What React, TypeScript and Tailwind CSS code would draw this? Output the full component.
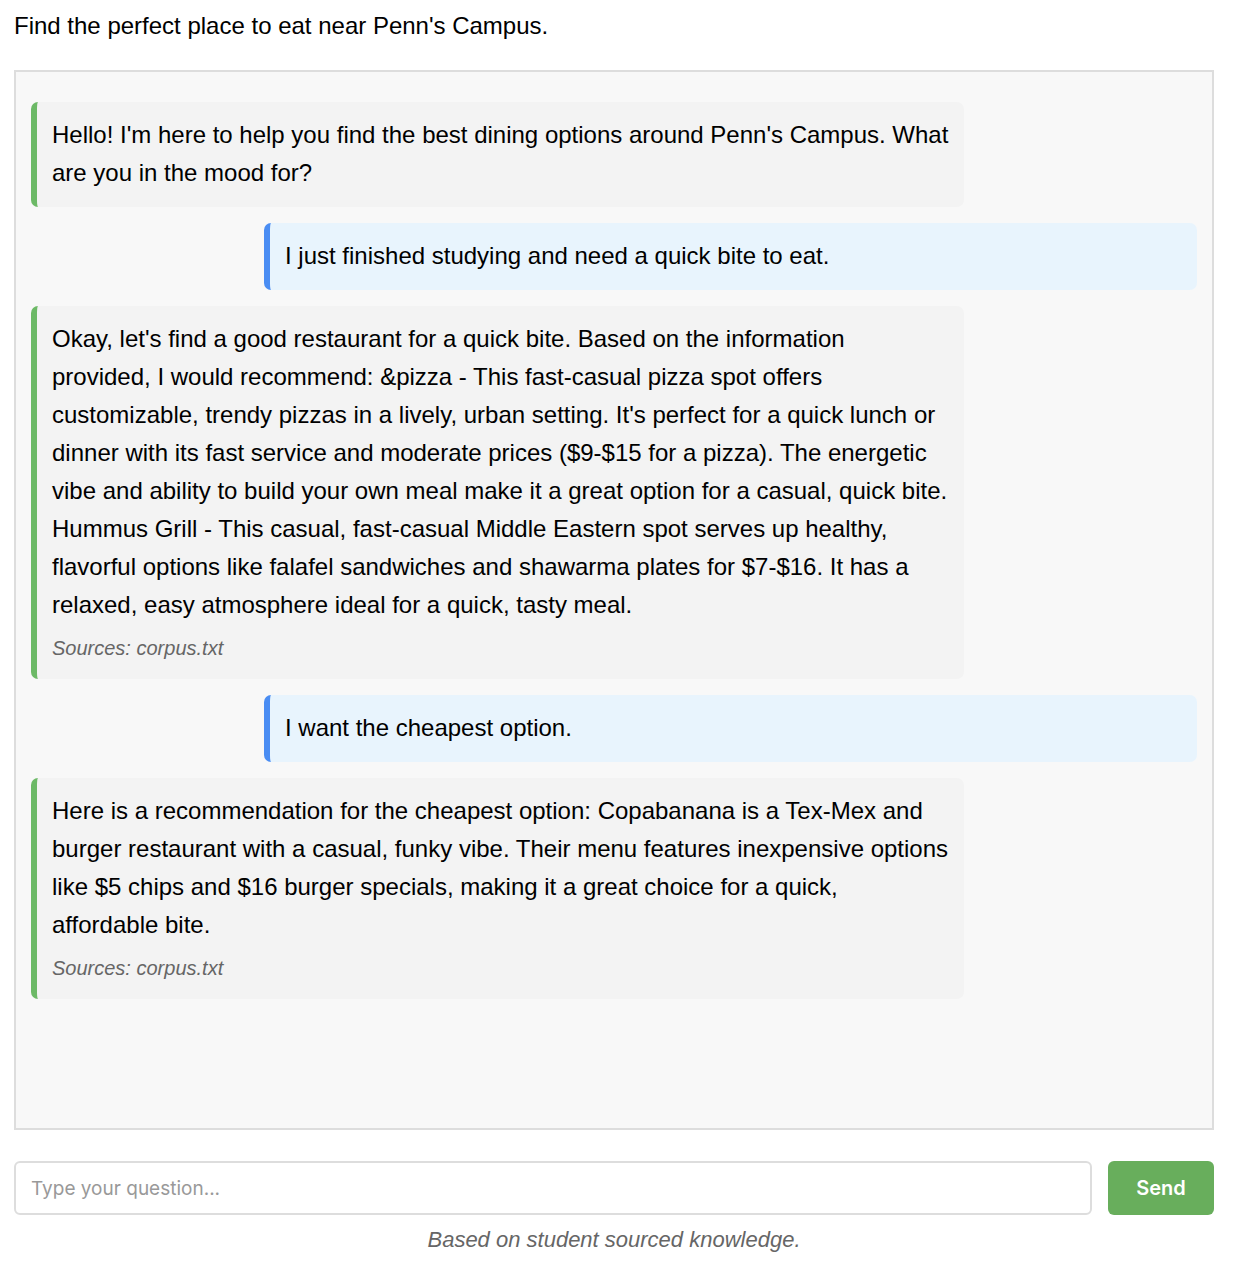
import { useState } from 'react';

type Message = {
  role: 'bot' | 'user';
  lines: string[];
  sources?: string;
};

// lines kept as they wrap in the original chat window
const messages: Message[] = [
  {
    role: 'bot',
    lines: [
      "Hello! I'm here to help you find the best dining options around Penn's Campus. What",
      'are you in the mood for?',
    ],
  },
  { role: 'user', lines: ['I just finished studying and need a quick bite to eat.'] },
  {
    role: 'bot',
    lines: [
      "Okay, let's find a good restaurant for a quick bite. Based on the information",
      'provided, I would recommend: &pizza - This fast-casual pizza spot offers',
      "customizable, trendy pizzas in a lively, urban setting. It's perfect for a quick lunch or",
      'dinner with its fast service and moderate prices ($9-$15 for a pizza). The energetic',
      'vibe and ability to build your own meal make it a great option for a casual, quick bite.',
      'Hummus Grill - This casual, fast-casual Middle Eastern spot serves up healthy,',
      'flavorful options like falafel sandwiches and shawarma plates for $7-$16. It has a',
      'relaxed, easy atmosphere ideal for a quick, tasty meal.',
    ],
    sources: 'corpus.txt',
  },
  { role: 'user', lines: ['I want the cheapest option.'] },
  {
    role: 'bot',
    lines: [
      'Here is a recommendation for the cheapest option: Copabanana is a Tex-Mex and',
      'burger restaurant with a casual, funky vibe. Their menu features inexpensive options',
      'like $5 chips and $16 burger specials, making it a great choice for a quick,',
      'affordable bite.',
    ],
    sources: 'corpus.txt',
  },
];

const ChatBubble = ({ msg }: { msg: Message }) => {
  const isUser = msg.role === 'user';
  return (
    <div
      className={
        isUser
          ? 'self-end w-[933px] rounded-[7px] border-l-[6px] border-[#4a8df3] bg-[#e8f4fd] pl-[15px] pr-[10px] pt-[14px] pb-[15px]'
          : 'self-start w-[933px] rounded-[7px] border-l-[6px] border-[#6cb966] bg-[#f3f3f3] pl-[15px] pr-[10px] pt-[14px] pb-[15px]'
      }
    >
      <p className="text-[24px] leading-[38px] text-black">
        {msg.lines.map((line, i) => (
          <span key={i} className="block whitespace-nowrap">
            {line}
          </span>
        ))}
      </p>
      {msg.sources && (
        <p className="mt-[8px] text-[20px] leading-[32px] italic text-[#666]">Sources: {msg.sources}</p>
      )}
    </div>
  );
};

export default function App() {
  const [question, setQuestion] = useState('');

  return (
    <div className="min-h-screen bg-white px-[14px] pt-[7px] font-['Liberation_Sans',Arial,sans-serif]">
      <div className="w-[1200px]">
        <h1 className="text-[24px] leading-[38px] font-normal text-black">
          Find the perfect place to eat near Penn's Campus.
        </h1>

        {/* Chat window */}
        <div className="mt-[25px] h-[1060px] overflow-y-auto border-2 border-[#dddddd] bg-[#f8f8f8] px-[15px] pt-[30px]">
          <div className="flex flex-col gap-[16px]">
            {messages.map((m, i) => (
              <ChatBubble key={i} msg={m} />
            ))}
          </div>
        </div>

        {/* Input row */}
        <div className="mt-[31px] flex gap-[16px]">
          <input
            value={question}
            onChange={(e) => setQuestion(e.target.value)}
            placeholder="Type your question..."
            className="h-[54px] flex-1 rounded-[6px] border-2 border-[#dddddd] bg-white px-[15px] font-['Inter',sans-serif] text-[19px] text-black outline-none placeholder:text-[#999]"
          />
          <button className="h-[54px] w-[106px] rounded-[6px] bg-[#68ae5c] font-['Inter',sans-serif] text-[20px] font-semibold text-white">
            Send
          </button>
        </div>

        <p className="mt-[7px] text-center text-[22px] leading-[35px] italic text-[#666]">
          Based on student sourced knowledge.
        </p>
      </div>
    </div>
  );
}
